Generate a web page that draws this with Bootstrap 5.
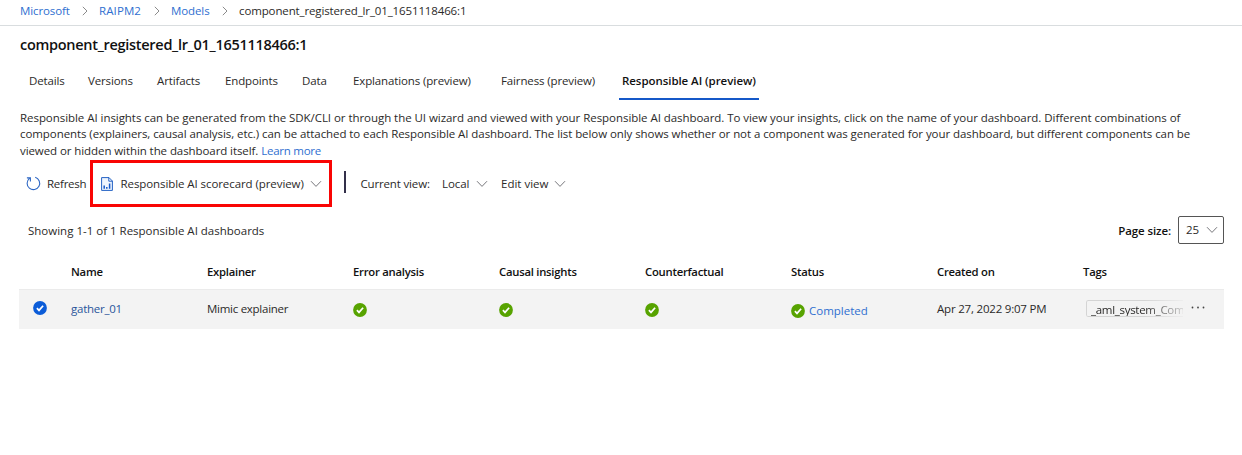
<!DOCTYPE html>
<html lang="en">
<head>
<meta charset="utf-8">
<meta name="viewport" content="width=device-width, initial-scale=1">
<title>component_registered_lr_01_1651118466:1</title>
<link href="https://cdn.jsdelivr.net/npm/bootstrap@5.3.0/dist/css/bootstrap.min.css" rel="stylesheet">
<style>
body{font-family:"Open Sans","Noto Sans",sans-serif;font-size:11.5px;line-height:16px;color:#2b2a29;background:#fff;overflow:hidden;letter-spacing:-.1px}
a{color:#2f6fd0;text-decoration:none}
svg{display:block;flex:none;fill:none}
.crumbs{height:26px;border-bottom:1px solid #d9dddf;padding:3px 0 0 20px;display:grid;grid-template-columns:79px 72px 68px auto;white-space:nowrap;margin:0;list-style:none}
.crumbs li{display:flex;justify-content:space-between}
.crumbs svg{margin:3px 11px 0 0}
.crumbs .workspace{letter-spacing:.1px}
.crumbs .current{letter-spacing:-.13px}
.page-name{font-size:14.5px;line-height:20px;font-weight:600;color:#111;padding:9px 0 0 20px;height:29px;margin:0;letter-spacing:-.29px}
.tabs{padding:18px 0 0 29px;display:grid;grid-template-columns:59px 69px 68px 77px 51px 148px 118px 140px;height:45px;white-space:nowrap}
.tabs .nav-link{padding:0;color:#2b2a29;letter-spacing:-.13px}
.tabs .nav-link.active{font-weight:600;color:#111;border-bottom:2px solid #1558c8;padding-left:3px;height:27px;letter-spacing:-.06px}
.intro{padding:10px 0 0 20px;height:60px;margin:0;line-height:16.4px;white-space:nowrap}
.intro .l1{letter-spacing:-.05px}
.intro .l2{letter-spacing:-.072px}
.intro .l3{letter-spacing:-.08px}
.intro a{letter-spacing:-.25px}
.toolbar{height:47px;padding-left:26px;white-space:nowrap}
.toolbar button,.size-box{border:0;background:none;padding:0;color:inherit;letter-spacing:inherit;display:flex;align-items:center}
.toolbar span{text-align:left}
.toolbar .refresh{gap:6px;width:64px;letter-spacing:-.25px}
.toolbar .scorecard{border:3px solid #f90504;width:242px;height:47px;padding-left:8px;letter-spacing:-.08px}
.scorecard span{margin-left:7.5px;width:189.5px}
.rule{width:1.5px;height:22px;background:#33304a;margin:0 15px 3px 12px}
.view-label{width:81.5px;letter-spacing:-.16px}
.view-name{width:34px}
.edit-view{margin-left:13px}
.edit-view span{width:53px;letter-spacing:0}
.summary{height:47px;padding:0 18px 0 28px}
.count{letter-spacing:0}
.semi{font-weight:600;color:#111;margin-right:7px}
.size-box{border:1px solid #555;border-radius:2px;width:46px;height:28px;padding-left:7px;margin-top:-2px}
.size-box span{width:20px;text-align:left}
.grid-list{width:1205px;table-layout:fixed;margin:0 0 0 19px;color:inherit;--bs-table-bg:transparent}
.grid-list .c-pick{width:52px}
.grid-list .c-name{width:136px}
.grid-list .c-std{width:146px}
.grid-list th,.grid-list td{padding:0;border:0;white-space:nowrap;vertical-align:top}
.grid-list th{height:35px;font-size:11.3px;font-weight:600;color:#111;padding-top:10px;letter-spacing:-.25px}
.grid-list tbody tr{background:#f3f3f3;height:40px;box-shadow:inset 0 1px #ebebeb}
.grid-list td{padding-top:12px}
.picked{margin-left:14px;color:#0b5cd8}
.done{color:#57a300}
td>.done{margin-top:2px}
.name-link{color:#29559b;letter-spacing:-.25px}
.explainer{letter-spacing:-.27px}
.status{margin-top:2px;gap:4px}
.status a{letter-spacing:0}
.created{letter-spacing:-.2px}
.tags{margin:-1px 0 0 3px;gap:8px}
.tag-chip{width:97px;height:17px;line-height:17px;border:1px solid #d4d4d4;border-right:0;border-radius:2px 0 0 2px;padding-left:4px;overflow:hidden;letter-spacing:-.3px;-webkit-mask-image:linear-gradient(90deg,#000 60%,transparent 108%);mask-image:linear-gradient(90deg,#000 60%,transparent 108%)}
.tags svg{margin-top:2px}
</style>
</head>
<body>
<svg width="0" height="0" class="position-absolute">
  <symbol id="chev" viewBox="0 0 12 8"><path d="M1 1.2 6 6.4 11 1.2" stroke="#77777c" stroke-width="1"/></symbol>
  <symbol id="sep" viewBox="0 0 6 10"><path d="M.8.8 5 5 .8 9.2" stroke="#8b8b8b" stroke-width="1"/></symbol>
  <symbol id="ok" viewBox="0 0 14 14"><circle cx="7" cy="7" r="6.9" fill="currentColor"/><path d="M3.9 7.2 6 9.4 10.1 4.7" stroke="#fff" stroke-width="1.7"/></symbol>
</svg>

<nav aria-label="breadcrumb">
  <ol class="crumbs">
    <li><a href="#">Microsoft</a><svg width="6" height="10"><use href="#sep"/></svg></li>
    <li><a href="#" class="workspace">RAIPM2</a><svg width="6" height="10"><use href="#sep"/></svg></li>
    <li><a href="#">Models</a><svg width="6" height="10"><use href="#sep"/></svg></li>
    <li class="current">component_registered_lr_01_1651118466:1</li>
  </ol>
</nav>

<h1 class="page-name">component_registered_lr_01_1651118466:1</h1>

<nav class="nav tabs">
  <a class="nav-link" href="#">Details</a>
  <a class="nav-link" href="#">Versions</a>
  <a class="nav-link" href="#">Artifacts</a>
  <a class="nav-link" href="#">Endpoints</a>
  <a class="nav-link" href="#">Data</a>
  <a class="nav-link" href="#">Explanations (preview)</a>
  <a class="nav-link" href="#">Fairness (preview)</a>
  <a class="nav-link active" href="#">Responsible AI (preview)</a>
</nav>

<p class="intro"><span class="l1">Responsible AI insights can be generated from the SDK/CLI or through the UI wizard and viewed with your Responsible AI dashboard. To view your insights, click on the name of your dashboard. Different combinations of</span><br>
<span class="l2">components (explainers, causal analysis, etc.) can be attached to each Responsible AI dashboard. The list below only shows whether or not a component was generated for your dashboard, but different components can be</span><br>
<span class="l3">viewed or hidden within the dashboard itself. </span><a href="#">Learn more</a></p>

<div class="toolbar d-flex align-items-center">
  <button class="refresh" type="button">
    <svg width="15" height="15" viewBox="0 0 15 15"><path d="M9.2 1.3A6.3 6.3 0 1 1 3.5 2.4M.9 1.9H4.4V5.4" stroke="#2c66c4" stroke-width="1.1"/></svg>
    Refresh
  </button>
  <button class="scorecard" type="button">
    <svg width="12" height="14" viewBox="0 0 12 14"><path d="M.6.6H8L11.4 4V13.4H.6ZM7.8.6V4.2H11.4" fill="#eef4fd" stroke="#2462c4" stroke-width="1"/><path d="M3.2 8.5V11.8M5.8 10V11.8M8.6 6.5V11.8" stroke="#1558c8" stroke-width="1.5"/></svg>
    <span>Responsible AI scorecard (preview)</span>
    <svg width="12" height="8"><use href="#chev"/></svg>
  </button>
  <div class="rule"></div>
  <span class="view-label">Current view:</span>
  <button type="button"><span class="view-name">Local</span><svg width="12" height="8"><use href="#chev"/></svg></button>
  <button type="button" class="edit-view"><span>Edit view</span><svg width="12" height="8"><use href="#chev"/></svg></button>
</div>

<div class="summary d-flex align-items-center">
  <span class="count me-auto">Showing 1-1 of 1 Responsible AI dashboards</span>
  <span class="semi">Page size:</span>
  <button class="size-box" type="button"><span>25</span><svg width="12" height="8"><use href="#chev"/></svg></button>
</div>

<table class="table grid-list">
  <colgroup><col class="c-pick"><col class="c-name"><col class="c-std"><col class="c-std"><col class="c-std"><col class="c-std"><col class="c-std"><col class="c-std"><col></colgroup>
  <thead>
    <tr><th></th><th>Name</th><th>Explainer</th><th>Error analysis</th><th>Causal insights</th><th>Counterfactual</th><th>Status</th><th>Created on</th><th>Tags</th></tr>
  </thead>
  <tbody>
    <tr>
      <td><svg class="picked" width="14" height="14"><use href="#ok"/></svg></td>
      <td><a href="#" class="name-link">gather_01</a></td>
      <td class="explainer">Mimic explainer</td>
      <td><svg class="done" width="14" height="14"><use href="#ok"/></svg></td>
      <td><svg class="done" width="14" height="14"><use href="#ok"/></svg></td>
      <td><svg class="done" width="14" height="14"><use href="#ok"/></svg></td>
      <td><div class="status d-flex align-items-center"><svg class="done" width="14" height="14"><use href="#ok"/></svg><a href="#">Completed</a></div></td>
      <td class="created">Apr 27, 2022 9:07 PM</td>
      <td><div class="tags d-flex"><div class="tag-chip">_aml_system_Com</div><svg width="14" height="14" viewBox="0 0 14 14"><g fill="#444"><circle cx="1.5" cy="5.5" r=".9"/><circle cx="7" cy="5.5" r=".9"/><circle cx="12.5" cy="5.5" r=".9"/></g></svg></div></td>
    </tr>
  </tbody>
</table>
<script src="https://cdn.jsdelivr.net/npm/bootstrap@5.3.0/dist/js/bootstrap.bundle.min.js"></script>
</body>
</html>
